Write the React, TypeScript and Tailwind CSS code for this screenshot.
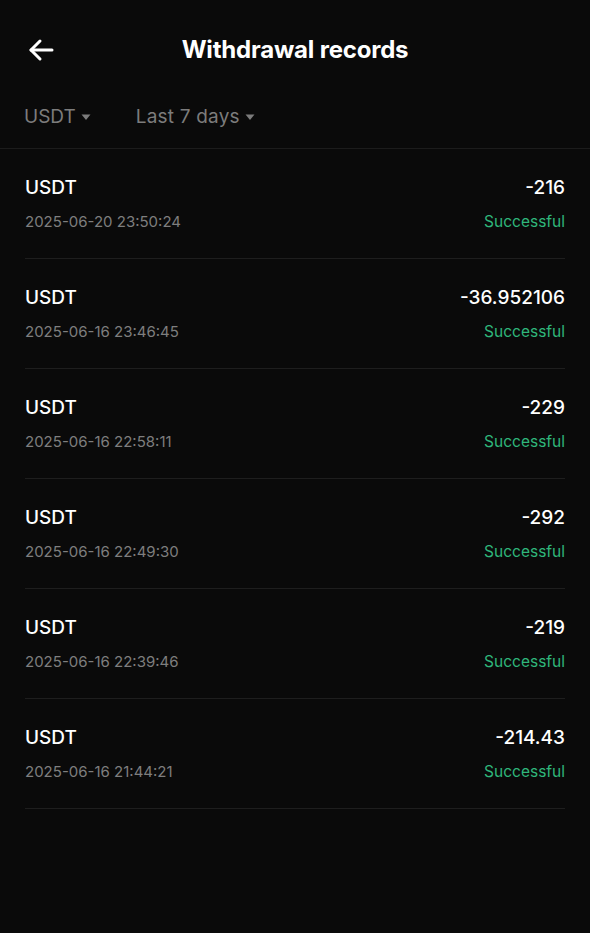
import React from "react";

const rows = [
  { amt: "-216", date: "2025-06-20 23:50:24" },
  { amt: "-36.952106", date: "2025-06-16 23:46:45" },
  { amt: "-229", date: "2025-06-16 22:58:11" },
  { amt: "-292", date: "2025-06-16 22:49:30" },
  { amt: "-219", date: "2025-06-16 22:39:46" },
  { amt: "-214.43", date: "2025-06-16 21:44:21" },
];

function Caret() {
  return (
    <svg width="10" height="8" viewBox="0 0 10 8" className="ml-[5px]">
      <path d="M0.5 1.5 H9.5 L5 7 Z" fill="#7c7c7c" />
    </svg>
  );
}

export default function App() {
  return (
    <div
      className="w-[590px] min-h-[933px] bg-[#0a0a0a] text-white"
      style={{ fontFamily: "Inter, 'Liberation Sans', sans-serif" }}
    >
      <div className="relative h-[100px] flex items-center justify-center">
        <svg
          className="absolute left-[28px] top-[38px]"
          width="26"
          height="24"
          viewBox="0 0 26 24"
          fill="none"
          stroke="white"
          strokeWidth="3"
          strokeLinecap="round"
          strokeLinejoin="round"
        >
          <path d="M24 12 H3" />
          <path d="M12 3 L3 12 L12 21" />
        </svg>
        <div className="text-[24px] font-bold tracking-[-0.2px]">Withdrawal records</div>
      </div>
      <div className="flex items-center h-[30px] mt-[2px] px-[24px] text-[19px] text-[#7c7c7c]">
        <div className="flex items-center">
          USDT
          <Caret />
        </div>
        <div className="flex items-center ml-[45px]">
          <span className="tracking-[0.2px]">Last 7 days</span>
          <Caret />
        </div>
      </div>
      <div className="mt-[16px] h-px bg-[#1c1c1c]" />
      <div className="px-[25px]">
        {rows.map((r, i) => (
          <div key={i} className="border-b border-[#1e1e1e] pt-[27px] pb-[26px]">
            <div className="flex justify-between items-center h-[24px] text-[19px] font-medium">
              <span>USDT</span>
              <span>{r.amt}</span>
            </div>
            <div className="flex justify-between items-center h-[20px] mt-[12px] text-[15px]">
              <span className="text-[#7e7e7e]">{r.date}</span>
              <span className="text-[#2fb67b] text-[15.5px]">Successful</span>
            </div>
          </div>
        ))}
      </div>
    </div>
  );
}
